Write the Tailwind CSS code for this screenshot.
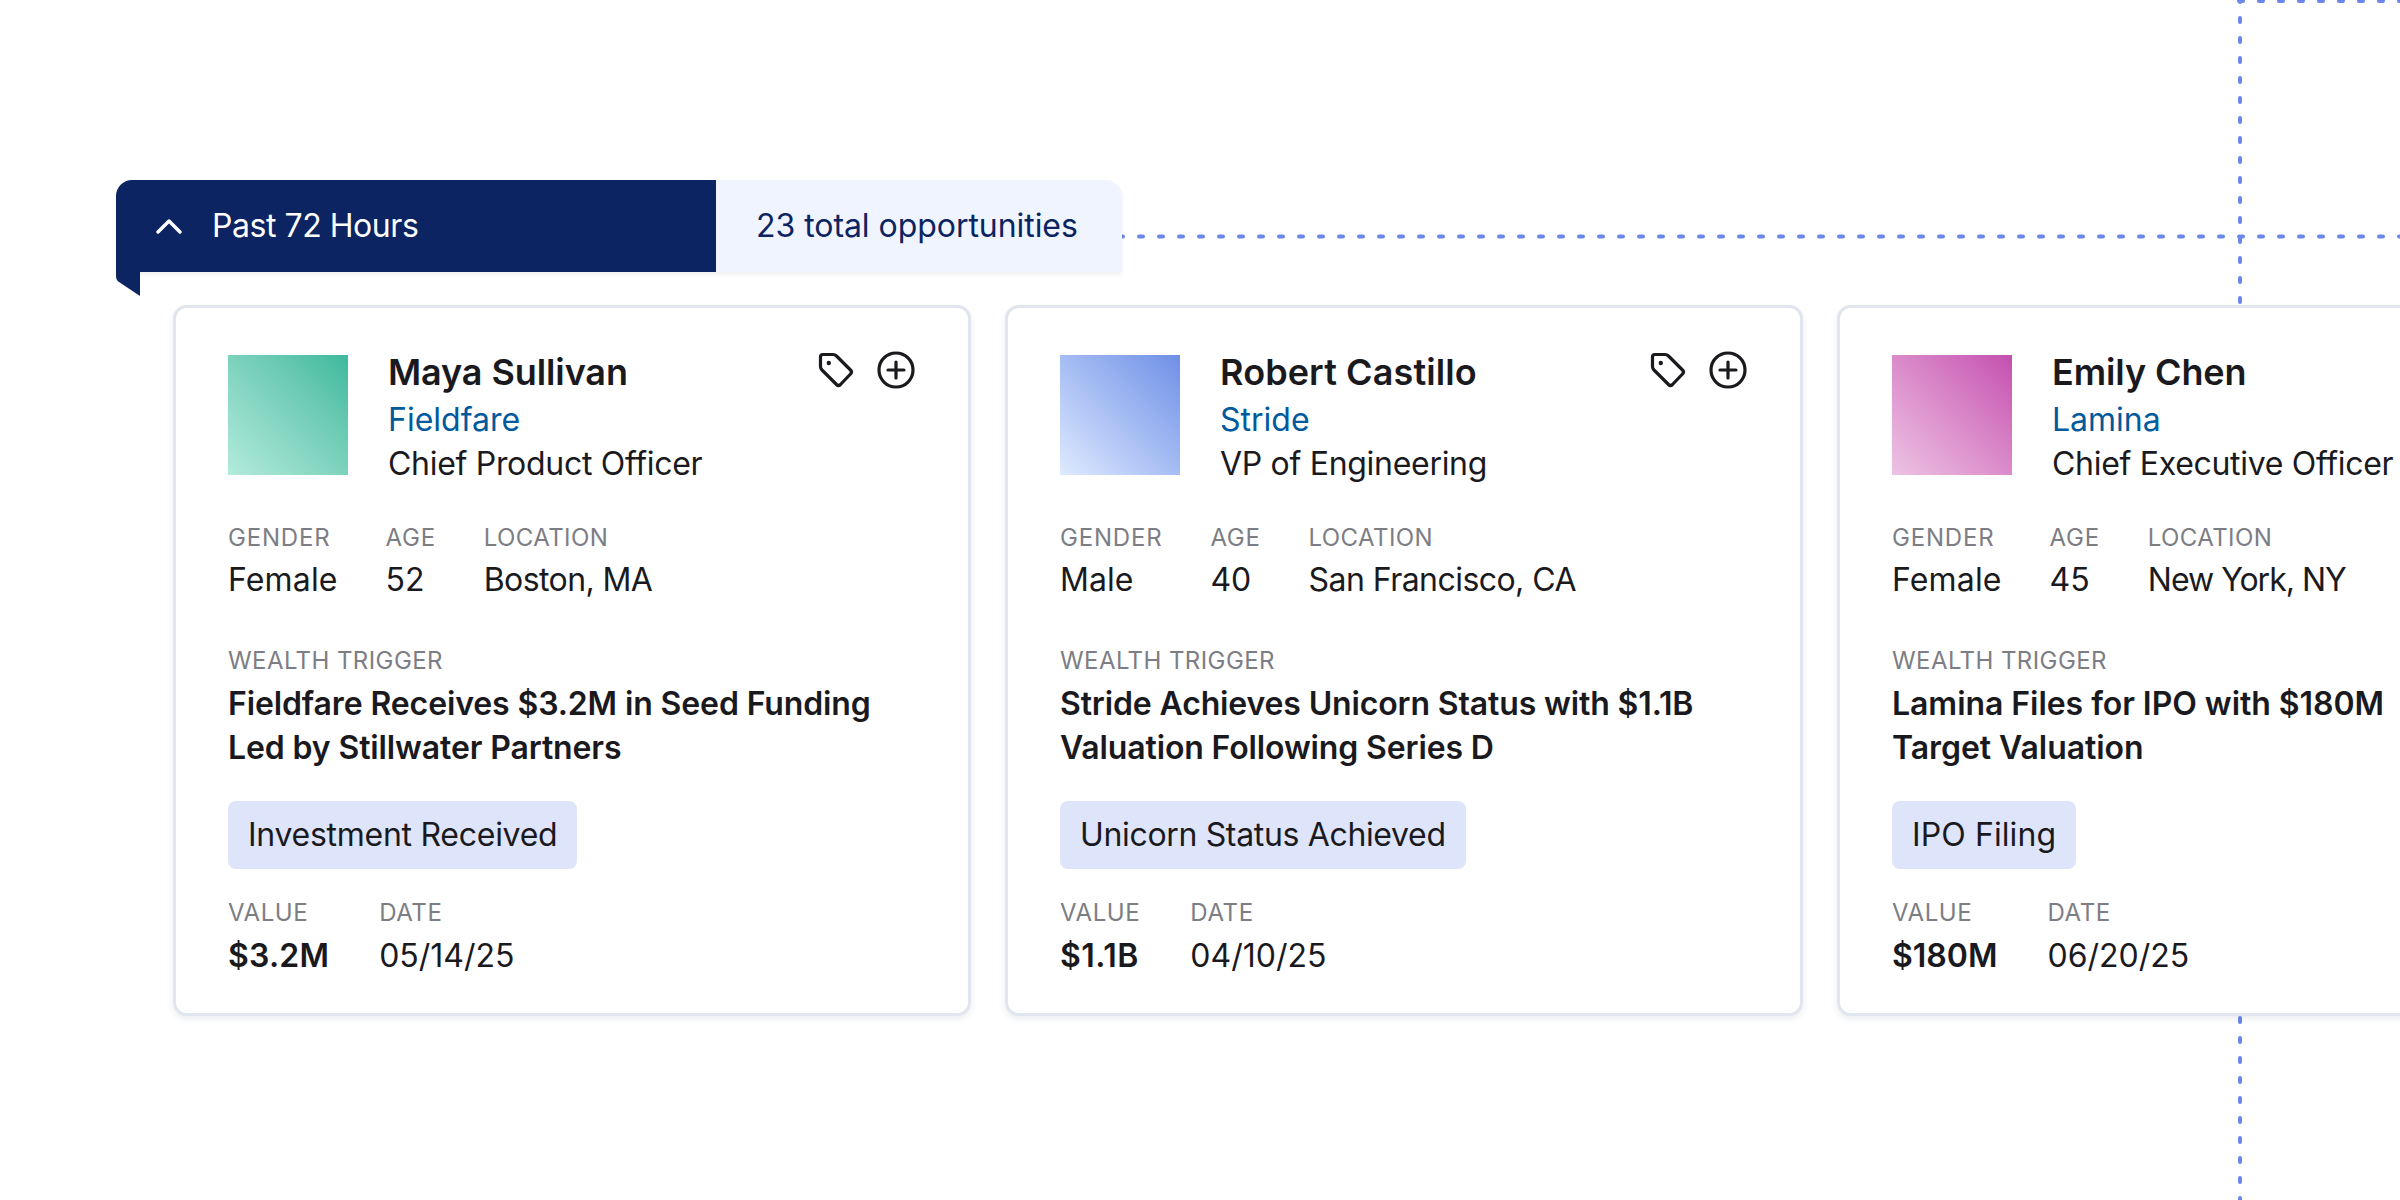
<!doctype html>
<html><head><meta charset="utf-8"><script src="https://cdn.jsdelivr.net/npm/@tailwindcss/browser@4"></script></head>
<body class="bg-white">
<div class="relative w-[2400px] h-[1200px] overflow-hidden bg-white font-['Inter',sans-serif] text-[#1a1a1e]">
<svg class="absolute left-0 top-0" width="2400" height="1200" fill="none" stroke="#6b87ea" stroke-linecap="round">
<path d="M1119 236.5H2400" stroke-width="4" stroke-dasharray="4 16"/>
<path d="M2240 -2V303M2240 1018V1200" stroke-width="4" stroke-dasharray="4 16"/>
<path d="M2239 1H2400" stroke-width="4" stroke-dasharray="4 16"/>
</svg>
<div class="relative pt-[180px] pl-[116px]">
  <div class="flex h-[92px] w-[1006px] rounded-t-[16px] shadow-[0_3px_4px_rgba(0,0,0,0.06)]">
    <div class="flex w-[600px] items-center gap-[30px] rounded-tl-[16px] bg-[#0c2461] pl-[40px] text-[32px] text-white">
      <svg width="26" height="16" viewBox="0 0 26 16" fill="none" stroke="white" stroke-width="3.4" stroke-linecap="round" stroke-linejoin="round"><path d="M2 14 13 3 24 14"/></svg>
      <span class="tracking-[-0.45px]">Past 72 Hours</span>
    </div>
    <div class="flex flex-1 items-center rounded-tr-[16px] bg-[#f0f4ff] pl-[40px] text-[32px] tracking-[-0.05px] text-[#0c2461]">23 total opportunities</div>
  </div>
  <svg class="absolute left-[116px] top-[272px]" width="24" height="24" viewBox="0 0 24 24"><path d="M0 0H24V24L3 10Q0 8 0 4Z" fill="#0c2461"/></svg>
  <div class="ml-[57px] mt-[33px] flex gap-[34px]">

    <div class="h-[711px] w-[798px] shrink-0 rounded-[14px] border-[3px] border-[#e1e5ee] bg-white px-[52px] pt-[47px] shadow-[0_3px_6px_rgba(30,50,90,0.09)]">
      <div class="flex gap-[40px]">
        <div class="size-[120px] shrink-0 bg-linear-to-bl from-[#3bb99d] to-[#b2ebdd]"></div>
        <div class="-mt-[8px] flex-1">
          <div class="flex items-start justify-between">
            <div class="text-[36px] leading-[51px] font-semibold tracking-[-0.1px]">Maya Sullivan</div>
            <div class="mt-[3px] flex gap-[20px]">
              <svg width="40" height="40" viewBox="0 0 40 40" fill="none" stroke="#1a1a1e" stroke-width="3.2" stroke-linejoin="round"><path d="M4.5 7Q4.5 4.5 7 4.5H17Q19 4.5 20.5 6L34.5 20Q36.5 22 34.5 24L24.5 34.5Q22.5 36.5 20.5 34.5L6 20Q4.5 18.5 4.5 16.5Z"/><circle cx="12.8" cy="13" r="2.2" fill="#1a1a1e" stroke="none"/></svg>
              <svg width="40" height="40" viewBox="0 0 40 40" fill="none" stroke="#1a1a1e" stroke-width="3.2" stroke-linecap="round"><circle cx="20" cy="20" r="17"/><path d="M20 12v16M12 20h16"/></svg>
            </div>
          </div>
          <div class="-mt-[0px] text-[32px] leading-[44px] text-[#005a9c]">Fieldfare</div>
          <div class="text-[32px] leading-[44px] tracking-[-0.3px]">Chief Product Officer</div>
        </div>
      </div>
      <div class="mt-[36px] flex gap-[48px]">
        <div><div class="text-[24px] leading-[32px] tracking-[0.8px] text-[#7d7d84]">GENDER</div><div class="mt-[4px] text-[32px] leading-[44px] tracking-[0.15px]">Female</div></div>
        <div><div class="text-[24px] leading-[32px] tracking-[0.7px] text-[#7d7d84]">AGE</div><div class="mt-[4px] text-[32px] leading-[44px]">52</div></div>
        <div><div class="text-[24px] leading-[32px] tracking-[0.4px] text-[#7d7d84]">LOCATION</div><div class="mt-[4px] text-[32px] leading-[44px] tracking-[-0.6px]">Boston, MA</div></div>
      </div>
      <div class="mt-[43px] text-[24px] leading-[32px] tracking-[0.42px] text-[#7d7d84]">WEALTH TRIGGER</div>
      <div class="mt-[5px] text-[32px] leading-[44px] font-semibold tracking-[-0.12px]">Fieldfare Receives $3.2M in Seed Funding<br>Led by Stillwater Partners</div>
      <div class="mt-[31px] inline-flex h-[68px] items-center rounded-[8px] bg-[#dee5fb] px-[20px] text-[32px] tracking-[-0.27px]">Investment Received</div>
      <div class="mt-[28px] flex gap-[50px]">
        <div><div class="text-[24px] leading-[32px] tracking-[0.6px] text-[#7d7d84]">VALUE</div><div class="mt-[5px] text-[32px] leading-[44px] font-semibold tracking-[0.2px]">$3.2M</div></div>
        <div><div class="text-[24px] leading-[32px] tracking-[0.6px] text-[#7d7d84]">DATE</div><div class="mt-[5px] text-[32px] leading-[44px]">05/14/25</div></div>
      </div>
    </div>

    <div class="h-[711px] w-[798px] shrink-0 rounded-[14px] border-[3px] border-[#e1e5ee] bg-white px-[52px] pt-[47px] shadow-[0_3px_6px_rgba(30,50,90,0.09)]">
      <div class="flex gap-[40px]">
        <div class="size-[120px] shrink-0 bg-linear-to-bl from-[#6f8fe6] to-[#dfeafe]"></div>
        <div class="-mt-[8px] flex-1">
          <div class="flex items-start justify-between">
            <div class="text-[36px] leading-[51px] font-semibold tracking-[0.1px]">Robert Castillo</div>
            <div class="mt-[3px] flex gap-[20px]">
              <svg width="40" height="40" viewBox="0 0 40 40" fill="none" stroke="#1a1a1e" stroke-width="3.2" stroke-linejoin="round"><path d="M4.5 7Q4.5 4.5 7 4.5H17Q19 4.5 20.5 6L34.5 20Q36.5 22 34.5 24L24.5 34.5Q22.5 36.5 20.5 34.5L6 20Q4.5 18.5 4.5 16.5Z"/><circle cx="12.8" cy="13" r="2.2" fill="#1a1a1e" stroke="none"/></svg>
              <svg width="40" height="40" viewBox="0 0 40 40" fill="none" stroke="#1a1a1e" stroke-width="3.2" stroke-linecap="round"><circle cx="20" cy="20" r="17"/><path d="M20 12v16M12 20h16"/></svg>
            </div>
          </div>
          <div class="text-[32px] leading-[44px] text-[#005a9c]">Stride</div>
          <div class="text-[32px] leading-[44px] tracking-[-0.3px]">VP of Engineering</div>
        </div>
      </div>
      <div class="mt-[36px] flex gap-[48px]">
        <div><div class="text-[24px] leading-[32px] tracking-[0.8px] text-[#7d7d84]">GENDER</div><div class="mt-[4px] text-[32px] leading-[44px]">Male</div></div>
        <div><div class="text-[24px] leading-[32px] tracking-[0.7px] text-[#7d7d84]">AGE</div><div class="mt-[4px] text-[32px] leading-[44px]">40</div></div>
        <div><div class="text-[24px] leading-[32px] tracking-[0.4px] text-[#7d7d84]">LOCATION</div><div class="mt-[4px] text-[32px] leading-[44px] tracking-[-0.55px]">San Francisco, CA</div></div>
      </div>
      <div class="mt-[43px] text-[24px] leading-[32px] tracking-[0.42px] text-[#7d7d84]">WEALTH TRIGGER</div>
      <div class="mt-[5px] text-[32px] leading-[44px] font-semibold tracking-[-0.14px]">Stride Achieves Unicorn Status with $1.1B<br>Valuation Following Series D</div>
      <div class="mt-[31px] inline-flex h-[68px] items-center rounded-[8px] bg-[#dee5fb] px-[20px] text-[32px] tracking-[-0.34px]">Unicorn Status Achieved</div>
      <div class="mt-[28px] flex gap-[50px]">
        <div><div class="text-[24px] leading-[32px] tracking-[0.6px] text-[#7d7d84]">VALUE</div><div class="mt-[5px] text-[32px] leading-[44px] font-semibold tracking-[0.5px]">$1.1B</div></div>
        <div><div class="text-[24px] leading-[32px] tracking-[0.6px] text-[#7d7d84]">DATE</div><div class="mt-[5px] text-[32px] leading-[44px]">04/10/25</div></div>
      </div>
    </div>

    <div class="h-[711px] w-[798px] shrink-0 rounded-[14px] border-[3px] border-[#e1e5ee] bg-white px-[52px] pt-[47px] shadow-[0_3px_6px_rgba(30,50,90,0.09)]">
      <div class="flex gap-[40px]">
        <div class="size-[120px] shrink-0 bg-linear-to-bl from-[#c44fb0] to-[#ecc3e3]"></div>
        <div class="-mt-[8px] flex-1">
          <div class="text-[36px] leading-[51px] font-semibold tracking-[-0.1px]">Emily Chen</div>
          <div class="text-[32px] leading-[44px] text-[#005a9c]">Lamina</div>
          <div class="text-[32px] leading-[44px] tracking-[-0.3px]">Chief Executive Officer</div>
        </div>
      </div>
      <div class="mt-[36px] flex gap-[48px]">
        <div><div class="text-[24px] leading-[32px] tracking-[0.8px] text-[#7d7d84]">GENDER</div><div class="mt-[4px] text-[32px] leading-[44px] tracking-[0.15px]">Female</div></div>
        <div><div class="text-[24px] leading-[32px] tracking-[0.7px] text-[#7d7d84]">AGE</div><div class="mt-[4px] text-[32px] leading-[44px]">45</div></div>
        <div><div class="text-[24px] leading-[32px] tracking-[0.4px] text-[#7d7d84]">LOCATION</div><div class="mt-[4px] text-[32px] leading-[44px] tracking-[-1px]">New York, NY</div></div>
      </div>
      <div class="mt-[43px] text-[24px] leading-[32px] tracking-[0.42px] text-[#7d7d84]">WEALTH TRIGGER</div>
      <div class="mt-[5px] text-[32px] leading-[44px] font-semibold tracking-[-0.05px]">Lamina Files for IPO with $180M<br>Target Valuation</div>
      <div class="mt-[31px] inline-flex h-[68px] items-center rounded-[8px] bg-[#dee5fb] px-[20px] text-[32px] tracking-[0.1px]">IPO Filing</div>
      <div class="mt-[28px] flex gap-[50px]">
        <div><div class="text-[24px] leading-[32px] tracking-[0.6px] text-[#7d7d84]">VALUE</div><div class="mt-[5px] text-[32px] leading-[44px] font-semibold">$180M</div></div>
        <div><div class="text-[24px] leading-[32px] tracking-[0.6px] text-[#7d7d84]">DATE</div><div class="mt-[5px] text-[32px] leading-[44px]">06/20/25</div></div>
      </div>
    </div>

  </div>
</div>
</div>
</body></html>
